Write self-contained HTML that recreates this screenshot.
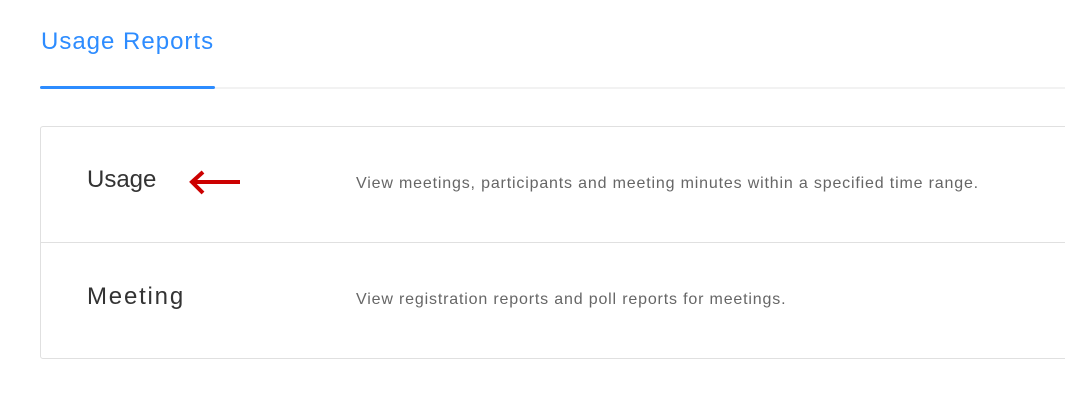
<!DOCTYPE html>
<html><head><style>
body{margin:0;width:1065px;height:408px;background:#fff;font-family:"Liberation Sans",sans-serif;position:relative;overflow:hidden}
.tab{position:absolute;left:41px;top:28px;font-size:24px;color:#2d8cff;letter-spacing:1px}
.ul{position:absolute;left:40px;top:86px;width:175px;height:3px;background:#2d8cff;border-radius:2px}
.line{position:absolute;left:215px;top:87px;width:850px;height:2px;background:#f2f2f2}
.card{position:absolute;left:40px;top:126px;width:1040px;height:233px;border:1px solid #e0e0e0;border-radius:3px;box-sizing:border-box}
.sep{position:absolute;left:40px;top:242px;width:1025px;height:1px;background:#e0e0e0}
.t{position:absolute;left:87px;font-size:24px;color:#333}
.d{position:absolute;left:356px;font-size:16px;color:#666;letter-spacing:0.83px}
</style></head><body>
<div class="tab">Usage Reports</div>
<div class="ul"></div><div class="line"></div>
<div class="card"></div><div class="sep"></div>
<div class="t" style="top:166px">Usage</div>
<div class="d" style="top:175px">View meetings, participants and meeting minutes within a specified time range.</div>
<svg style="position:absolute;left:186px;top:167px" width="56" height="32"><path d="M54 15H6M17 5L6 15L17 26" stroke="#c00" stroke-width="4" fill="none"/></svg>
<div class="t" style="top:283px;letter-spacing:1.8px">Meeting</div>
<div class="d" style="top:291px">View registration reports and poll reports for meetings.</div>
</body></html>
